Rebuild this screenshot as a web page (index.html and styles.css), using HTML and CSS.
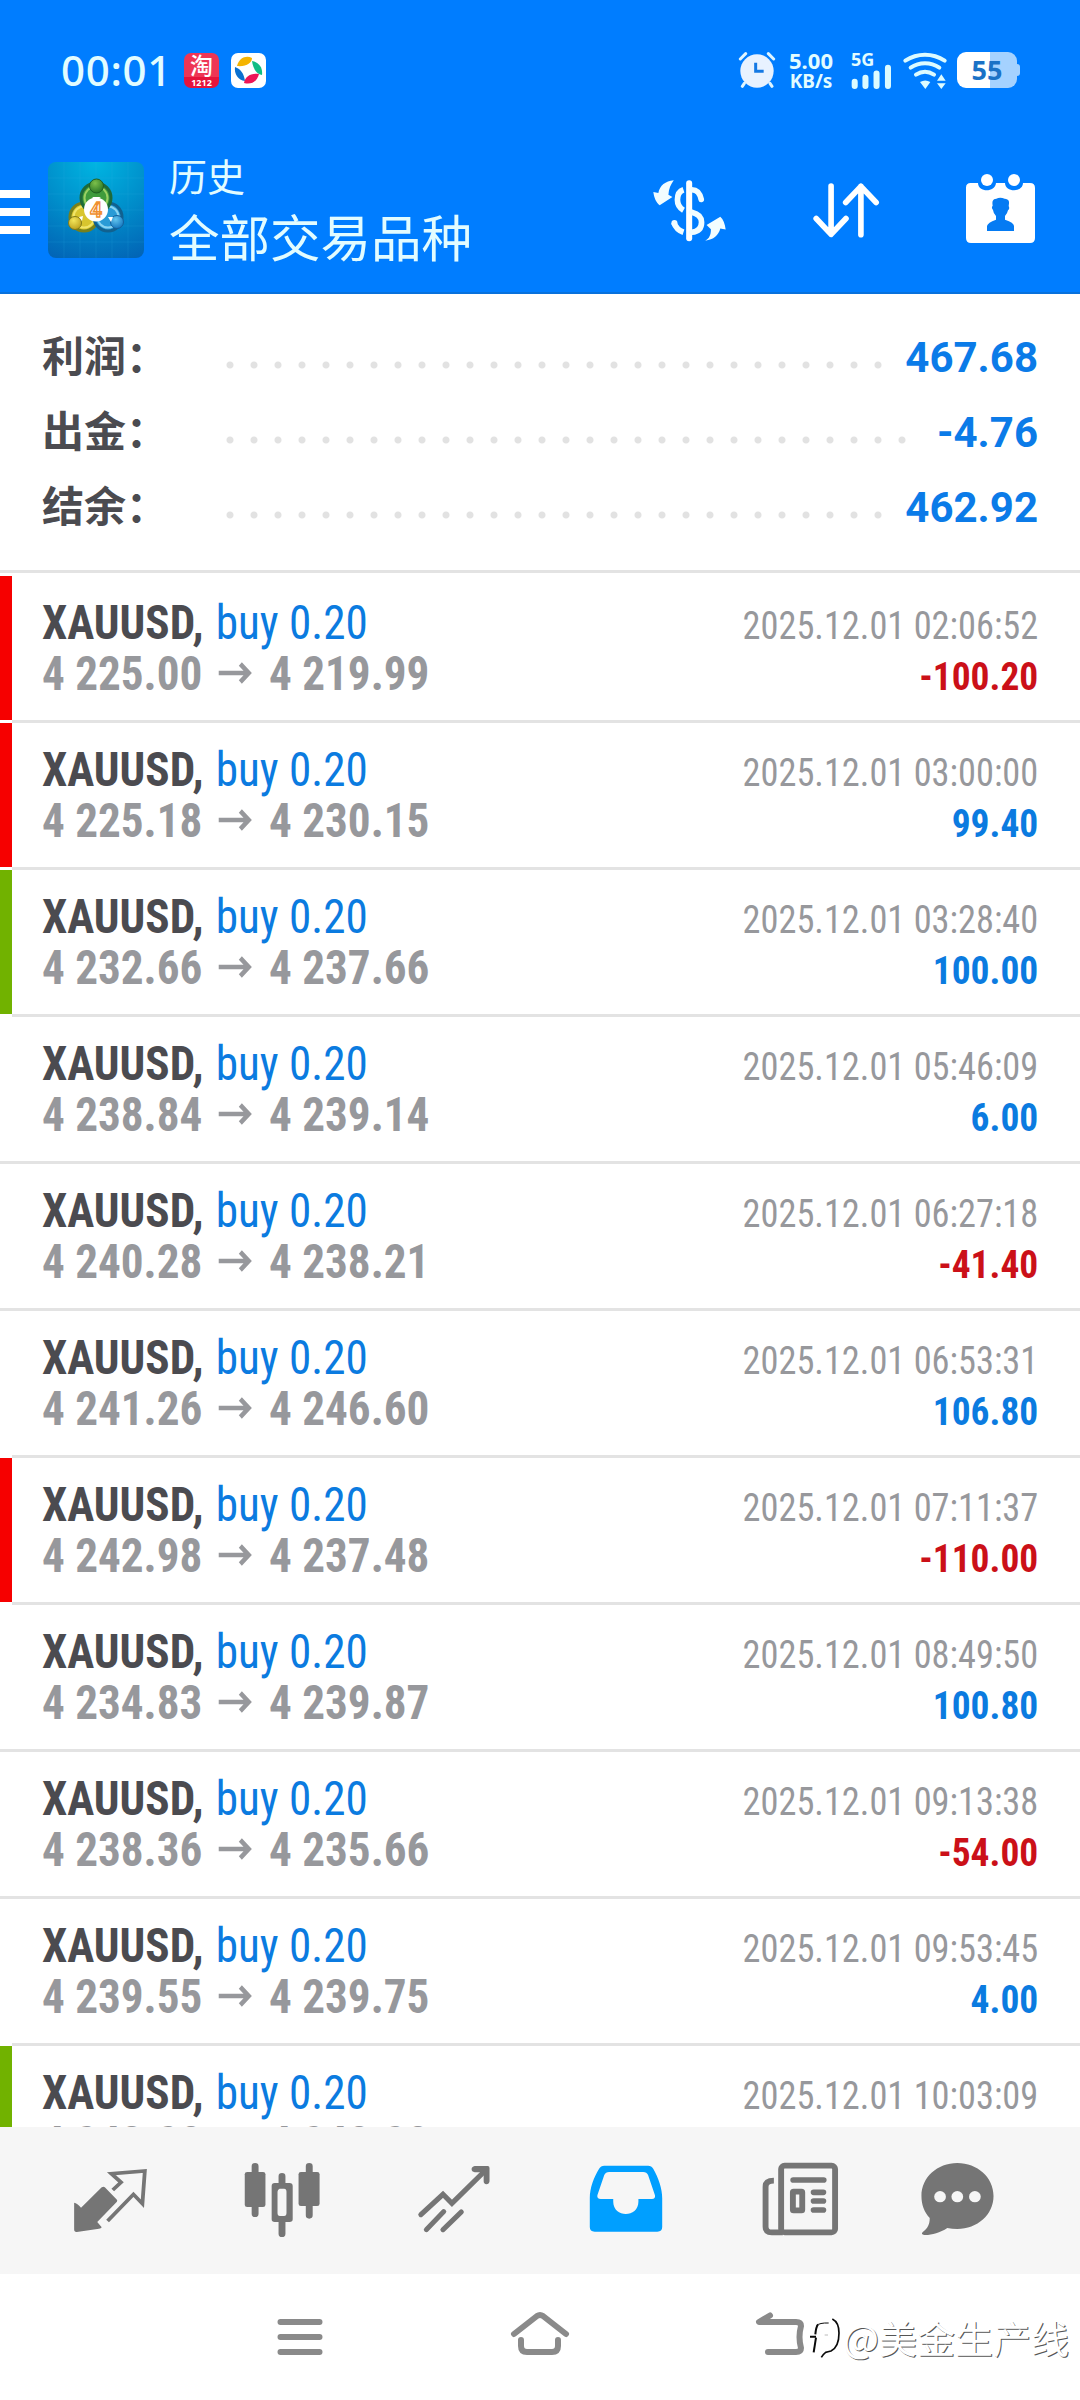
FILE: index.html
```html
<!DOCTYPE html>
<html lang="zh-CN">
<head>
<meta charset="utf-8">
<title>历史</title>
<link rel="stylesheet" href="styles.css">
</head>
<body>
<svg class="defs" width="0" height="0">
  <symbol id="arrow" viewBox="0 0 36 22"><path d="M0 11H32M23 2l9 9-9 9" fill="none" stroke="#97989c" stroke-width="4.6"/></symbol>
</svg>
<div class="screen">
  <header class="header">
    <div class="status">
      <span class="clock">00:01</span>
      <span class="app-shop"><b>淘</b><i>1212</i></span>
      <svg class="app-video" viewBox="0 0 35 35"><rect width="35" height="35" rx="7" fill="#fff"/><path d="M6 13C8 5 15 2 21 5c0 5-6 9-15 8z" fill="#f5b400"/><path d="M21 8c7 1 11 7 10 14-6-1-9-7-10-14z" fill="#10bd84"/><path d="M4 14c6 2 9 7 10 14C7 27 3 21 4 14z" fill="#0a70d0"/><path d="M13 30c1-6 6-10 15-9-2 8-8 11-15 9z" fill="#ed1556"/></svg>
      <svg class="alarm" viewBox="350 64 120 120" width="40" height="40"><g stroke="#dff5ff" stroke-width="9" stroke-linecap="round"><path d="M360 91l16-16M460 91l-16-16M372 164l-6 9M449 164l6 9"/></g><circle cx="410" cy="127" r="50" fill="#e8f2ff"/><path d="M406 102v26h24" fill="none" stroke="#1479e4" stroke-width="9"/></svg>
      <span class="speed"><b>5.00</b><i>KB/s</i></span>
      <span class="signal"><b>5G</b><svg viewBox="698 103 122 80" width="41" height="27"><g stroke="#dcfbff" stroke-width="18" stroke-linecap="round"><path d="M709 159v12M741 147v24M774 134v37M808 117v54"/></g></svg></span>
      <svg class="wifi" viewBox="847 64 141 120" width="47" height="40"><g fill="none" stroke="#dcfbff" stroke-width="12" stroke-linecap="round"><path d="M857 96c36-24 82-24 118 0M873 117c26-18 60-18 86 0M889 138c18-12 36-12 54 0"/></g><path d="M901 160q16-9 31 0l-15 21zM965 137l13 19h-26zM965 181l13-17h-26z" fill="#dcfbff"/></svg>
      <span class="battery"><span>55</span></span>
    </div>
    <div class="toolbar">
      <span class="burger"></span>
      <svg class="logo" viewBox="0 0 96 96">
        <defs>
          <radialGradient id="sky" cx=".5" cy="0" r="1.1"><stop offset="0" stop-color="#00b5e2"/><stop offset=".5" stop-color="#008fcb"/><stop offset="1" stop-color="#0263b5"/></radialGradient>
          <radialGradient id="gr" cx=".4" cy=".3" r=".8"><stop offset="0" stop-color="#7cc04a"/><stop offset="1" stop-color="#1f6e22"/></radialGradient>
          <radialGradient id="ye" cx=".4" cy=".3" r=".8"><stop offset="0" stop-color="#f3e55a"/><stop offset="1" stop-color="#b89a18"/></radialGradient>
          <radialGradient id="bl" cx=".4" cy=".3" r=".8"><stop offset="0" stop-color="#63c5ee"/><stop offset="1" stop-color="#0d6fbb"/></radialGradient>
        </defs>
        <rect width="96" height="96" rx="8" fill="url(#sky)"/>
        <path d="M16 0v96M32 0v96M48 0v96M64 0v96M80 0v96M0 16h96M0 32h96M0 48h96M0 64h96M0 80h96" stroke="#36b2e6" stroke-opacity=".16"/>
        <circle cx="36" cy="55" r="14" fill="#d8c52e" stroke="#77801c" stroke-width="3"/>
        <circle cx="36" cy="55" r="10.500" fill="none" stroke="#f1e568" stroke-width="2"/>
        <circle cx="60" cy="55" r="14" fill="#2a9bd6" stroke="#11618f" stroke-width="3"/>
        <circle cx="60" cy="55" r="10.500" fill="none" stroke="#8ad4f2" stroke-width="2"/>
        <circle cx="48" cy="36" r="15" fill="#3f9b3c" stroke="#1e6a3a" stroke-width="3"/>
        <circle cx="48" cy="36" r="11.500" fill="none" stroke="#9ad063" stroke-width="2"/>
        <circle cx="27" cy="61" r="6.500" fill="url(#ye)" stroke="#827a18"/><circle cx="69" cy="60" r="6.500" fill="url(#bl)" stroke="#145f9a"/><circle cx="48.500" cy="24" r="7" fill="url(#gr)" stroke="#215f22"/>
        <path d="M44 35l4 3 5-3zM31 55l4-1-1 5zM60 55l5 0-2 5z" fill="#fff"/>
        <circle cx="48" cy="47.500" r="12" fill="#fff"/><text x="48" y="55" text-anchor="middle" class="logo-four">4</text>
      </svg>
      <div class="titles"><h2>历史</h2><h1>全部交易品种</h1></div>
      <svg class="currency" viewBox="98 442 224 194" width="75" height="65"><path d="M163 449C138 452 121 464 117 487L102 484C104 501 111 517 121 523L159 499 147 492C148 475 154 461 163 449Z" fill="#f2fdff"/><path d="M257 629c12-6 17-17 17-34l-13-13 41-24c9 8 14 22 16 38l-16-3c-5 20-20 34-45 36z" fill="#f2fdff"/><path d="M209 458V622" stroke="#fff" stroke-width="18" stroke-linecap="round"/><path d="M192 477q-18 6-18 30 0 21 18 31M192 604q-21-7-29-29" fill="none" stroke="#f2fdff" stroke-width="17"/><circle cx="165" cy="576" r="9" fill="#f2fdff"/><path d="M217 477q22 0 28 29M217 544q29 7 29 30 0 27-29 30" fill="none" stroke="#f2fdff" stroke-width="17" stroke-linecap="round"/></svg>
      <svg class="sort" viewBox="576 454 204 172" width="68" height="57"><path d="M633 466V612M588 564l45 48 45-48M723 613V467M677 516l46-49 46 49" fill="none" stroke="#fff" stroke-width="17" stroke-linecap="round" stroke-linejoin="round"/></svg>
      <svg class="calendar" viewBox="1032 426 219 219" width="73" height="73"><path d="M1052 459h22c1 29 51 29 54 0h27c1 29 53 29 54 0h21q15 0 15 15V624q0 15-15 15H1053q-15 0-15-15V473q0-14 14-14z" fill="#fff"/><circle cx="1101" cy="450" r="18" fill="#fff"/><circle cx="1182" cy="450" r="18" fill="#fff"/><path d="M1101 603v-15q2-10 27-19v-11q-8-8-9-18-6-8-1-13c-2-14 0-20 11-21q11-5 25 0c13 2 15 7 12 22q4 8-2 13-2 10-9 17v11q27 9 27 19v15z" fill="#057bf3"/></svg>
    </div>
  </header>

  <section class="summary">
    <div class="sum-row"><span class="label">利润：</span><span class="leader"></span><span class="value">467.68</span></div>
    <div class="sum-row"><span class="label">出金：</span><span class="leader"></span><span class="value">-4.76</span></div>
    <div class="sum-row"><span class="label">结余：</span><span class="leader"></span><span class="value">462.92</span></div>
  </section>

  <main class="deals">
    <article class="deal sl"><div class="left"><p class="name"><b>XAUUSD,</b> buy 0.20</p><p class="prices">4 225.00<svg class="to"><use href="#arrow"/></svg>4 219.99</p></div><div class="right"><time>2025.12.01 02:06:52</time><p class="profit loss">-100.20</p></div></article>
    <article class="deal sl"><div class="left"><p class="name"><b>XAUUSD,</b> buy 0.20</p><p class="prices">4 225.18<svg class="to"><use href="#arrow"/></svg>4 230.15</p></div><div class="right"><time>2025.12.01 03:00:00</time><p class="profit">99.40</p></div></article>
    <article class="deal tp"><div class="left"><p class="name"><b>XAUUSD,</b> buy 0.20</p><p class="prices">4 232.66<svg class="to"><use href="#arrow"/></svg>4 237.66</p></div><div class="right"><time>2025.12.01 03:28:40</time><p class="profit">100.00</p></div></article>
    <article class="deal"><div class="left"><p class="name"><b>XAUUSD,</b> buy 0.20</p><p class="prices">4 238.84<svg class="to"><use href="#arrow"/></svg>4 239.14</p></div><div class="right"><time>2025.12.01 05:46:09</time><p class="profit">6.00</p></div></article>
    <article class="deal"><div class="left"><p class="name"><b>XAUUSD,</b> buy 0.20</p><p class="prices">4 240.28<svg class="to"><use href="#arrow"/></svg>4 238.21</p></div><div class="right"><time>2025.12.01 06:27:18</time><p class="profit loss">-41.40</p></div></article>
    <article class="deal"><div class="left"><p class="name"><b>XAUUSD,</b> buy 0.20</p><p class="prices">4 241.26<svg class="to"><use href="#arrow"/></svg>4 246.60</p></div><div class="right"><time>2025.12.01 06:53:31</time><p class="profit">106.80</p></div></article>
    <article class="deal sl"><div class="left"><p class="name"><b>XAUUSD,</b> buy 0.20</p><p class="prices">4 242.98<svg class="to"><use href="#arrow"/></svg>4 237.48</p></div><div class="right"><time>2025.12.01 07:11:37</time><p class="profit loss">-110.00</p></div></article>
    <article class="deal"><div class="left"><p class="name"><b>XAUUSD,</b> buy 0.20</p><p class="prices">4 234.83<svg class="to"><use href="#arrow"/></svg>4 239.87</p></div><div class="right"><time>2025.12.01 08:49:50</time><p class="profit">100.80</p></div></article>
    <article class="deal"><div class="left"><p class="name"><b>XAUUSD,</b> buy 0.20</p><p class="prices">4 238.36<svg class="to"><use href="#arrow"/></svg>4 235.66</p></div><div class="right"><time>2025.12.01 09:13:38</time><p class="profit loss">-54.00</p></div></article>
    <article class="deal"><div class="left"><p class="name"><b>XAUUSD,</b> buy 0.20</p><p class="prices">4 239.55<svg class="to"><use href="#arrow"/></svg>4 239.75</p></div><div class="right"><time>2025.12.01 09:53:45</time><p class="profit">4.00</p></div></article>
    <article class="deal tp"><div class="left"><p class="name"><b>XAUUSD,</b> buy 0.20</p><p class="prices">4 243.28<svg class="to"><use href="#arrow"/></svg>4 248.28</p></div><div class="right"><time>2025.12.01 10:03:09</time></div></article>
  </main>

  <nav class="tabs">
    <svg class="tab" viewBox="203 396 232 231" preserveAspectRatio="none"><path d="M215 518q9 2 20 15l60-61q5-3 9 0l33 35q5 4 2 8l-57 61 13 16q-2 4-8 4l-64 10q-8 1-8-8z" fill="#757575"/><path d="M327 480l24-23-28-26 97-8-7 98-26-28-75 80" fill="none" stroke="#757575" stroke-width="11"/></svg>
    <svg class="tab" viewBox="701 396 232 231" preserveAspectRatio="none"><g stroke="#757575" stroke-width="20" stroke-linecap="round" fill="#757575"><path d="M739 409V551M896 409V556M817 439V470M817 575V611"/></g><rect x="709" y="426" width="60" height="105" rx="7" fill="#757575"/><rect x="865" y="426" width="61" height="102" rx="7" fill="#757575"/><rect x="803" y="470" width="28" height="95" fill="#f6f6f6"/><path fill-rule="evenodd" d="M796 459h43q9 0 9 9v100q0 8-9 8h-43q-9 0-9-8V468q0-9 9-9zm14 17q-6 3-6 9v64q0 9 7 9h12q7 0 7-9v-64q0-9-7-9z" fill="#757575"/></svg>
    <svg class="tab" viewBox="1201 396 232 231" preserveAspectRatio="none"><g fill="none" stroke="#757575" stroke-width="15" stroke-linecap="round"><path d="M1221 554l64-61 26 27 96-98" stroke-linejoin="miter"/><path d="M1237 599l50-54M1285 599l53-53"/></g><path d="M1377 408h38q5 0 5 6v40q-1 9-9 9-8-1-8-9v-22l-7-5h-19q-9-2-9-9 0-8 9-10z" fill="#757575"/></svg>
    <svg class="tab" viewBox="135 396 232 231" preserveAspectRatio="none"><path d="M188 407H315q10 0 15 9c15 28 26 58 26 89v86q0 14-14 14H160q-14 0-14-14V505c0-32 12-64 27-89q5-9 15-9z" fill="#009fff"/><path d="M202 426h99q10 0 14 9l20 61q2 11-9 11H287v8c0 49-73 49-73 0v-8H178q-12 0-10-11l20-61q4-9 14-9z" fill="#f6f6f6"/></svg>
    <svg class="tab tab-news" viewBox="635 396 240 231" preserveAspectRatio="none"><g fill="none" stroke="#757575" stroke-width="17"><rect x="699" y="407" width="156" height="200" rx="10"/><path d="M678 452q-24 0-24 18V590q0 17 18 17h32"/><path d="M734 450h88M793 487h28M793 513h28M793 540h28" stroke-linecap="round"/></g><rect x="733" y="485" width="27" height="56" rx="2" fill="none" stroke="#757575" stroke-width="17"/></svg>
    <svg class="tab" viewBox="1099 396 232 231" preserveAspectRatio="none"><path d="M1213 399c58 0 105 43 105 99s-47 99-105 99q-15 0-29-3c-22 15-48 22-67 21q-11-3-4-9c15-11 20-24 20-42-16-18-24-40-24-66 0-56 46-99 104-99z" fill="#757575"/><circle cx="1163" cy="500" r="17" fill="#f6f6f6"/><circle cx="1213" cy="500" r="17" fill="#f6f6f6"/><circle cx="1264" cy="500" r="17" fill="#f6f6f6"/></svg>
  </nav>
  <footer class="sysnav">
    <svg viewBox="0 0 60 60" width="60" height="60"><path d="M10.500 15H49.500M10.500 30H49.500M10.500 45H49.500" stroke="#8a8a8a" stroke-width="6" stroke-linecap="round"/></svg>
    <svg viewBox="0 0 60 60" width="60" height="60"><g fill="none" stroke="#8a8a8a" stroke-width="6" stroke-linecap="round" stroke-linejoin="round"><path d="M4 27L27 9q3-2 6 0L56 27M11 33v6q0 6 6 6H42q6 0 6-6v-6"/></g></svg>
    <svg viewBox="0 0 60 60" width="60" height="60"><path d="M20 8.500L9 15H46q5 0 5 4-3 11 0 22 0 4-5 4H18" fill="none" stroke="#8a8a8a" stroke-width="6" stroke-linecap="round" stroke-linejoin="round"/></svg>
  </footer>
  <div class="watermark">
    <svg viewBox="25 85 100 135" width="34" height="45"><path d="M24 148l22-2c0-34 20-46 50-46l20 28-2 52-22 16-26 4-12-70-8 66h-12z" fill="#fff"/><g fill="none" stroke="#0a0a0a"><path d="M50 120q8-9 36-8" stroke-width="3"/><path d="M54 116q-6 8-8 30M30 153h18" stroke-width="6"/><path d="M48 156l-7 44" stroke-width="6"/><path d="M97 100q20 10 20 42 0 42-24 54-10 3-16 4-8 6-13 15" stroke-width="5"/><path d="M74 148h10" stroke="#999" stroke-width="2"/></g></svg>
    <span>@美金生产线</span>
  </div>
</div>
</body>
</html>
```
FILE: styles.css
```css
* { box-sizing: border-box; margin: 0; padding: 0; }
body { width: 1080px; height: 2400px; overflow: hidden; background: #fff; font-family: Roboto, "Noto Sans CJK SC", sans-serif; }
i { font-style: normal; }
.defs { display: block; position: absolute; }
.screen { position: relative; width: 1080px; height: 2400px; display: flex; flex-direction: column; background: #fff; }

.header { height: 294px; flex: none; background: #007dff; border-bottom: 2px solid #0871dc; color: #e2fcff; }
.status { height: 140px; padding-left: 61px; display: flex; align-items: center; font-family: "Noto Sans", "Noto Sans CJK SC", sans-serif; }
.clock { width: 123px; font-size: 42px; font-weight: 500; line-height: 40px; letter-spacing: .7px; }
.app-shop { width: 35px; height: 35px; border-radius: 7px; background: linear-gradient(#ee3655 0 70%, #e5143b 70%); display: flex; flex-direction: column; align-items: center; color: #fff; }
.app-shop b { font-size: 23px; line-height: 25px; font-weight: 500; }
.app-shop i { font-size: 9px; line-height: 9px; font-weight: 700; }
.app-video { width: 35px; height: 35px; margin-left: 12px; }
.alarm { margin-left: 471px; }
.speed { width: 54px; margin-left: 7px; display: flex; flex-direction: column; align-items: center; font-weight: 700; }
.speed b { font-size: 22px; line-height: 21px; font-weight: 700; }
.speed i { font-size: 19px; line-height: 20px; }
.signal { width: 43px; height: 40px; margin-left: 13px; display: flex; flex-direction: column; }
.signal b { font-size: 18px; line-height: 18px; height: 13px; font-weight: 700; }
.wifi { margin-left: 8px; }
.battery { position: relative; width: 60px; height: 36px; margin-left: 8px; border-radius: 9px; background: linear-gradient(90deg, #fff 55%, #a5d2ff 55%); color: #1b72c6; text-align: center; font-size: 27px; font-weight: 700; line-height: 36px; }
.battery::after { content: ""; position: absolute; right: -3px; top: 12px; width: 3px; height: 12px; border-radius: 0 3px 3px 0; background: #a5d2ff; }

.toolbar { height: 140px; display: flex; align-items: center; }
.burger { width: 30px; height: 44px; margin-top: 4px; background: repeating-linear-gradient(#fff 0 8px, transparent 8px 18px); }
.logo { width: 96px; height: 96px; margin-left: 18px; }
.logo-four { font: 700 21px Roboto, sans-serif; fill: #fff; stroke: #f09030; stroke-width: 1.4px; }
.titles { width: 487px; margin-left: 25px; font-family: "Noto Sans CJK SC", sans-serif; }
.titles h2 { font-size: 38px; font-weight: 400; line-height: 50px; }
.titles h1 { font-size: 50.500px; font-weight: 400; line-height: 70px; }
.currency { margin-left: -4px; }
.sort { margin-left: 85px; }
.calendar { margin-left: 84px; margin-bottom: 3px; }

.summary { height: 279px; flex: none; padding: 22px 42px 0; border-bottom: 3px solid #e3e3e3; color: #0b7be8; font-size: 42px; }
.sum-row { height: 75px; display: flex; line-height: 75px; align-items: baseline; }
.label { width: 176px; color: #4b4b50; font-family: "Noto Sans CJK SC", sans-serif; font-weight: 700; white-space: nowrap; }
.leader { flex: 1; height: 24px; margin-right: 18px; align-self: flex-start; margin-top: 37px; background: radial-gradient(circle at 12px 12px, #e2e2e2 3px, transparent 4px) 0 0 / 24px 24px; }
.value { font-weight: 700; }

.deals { flex: 1; min-height: 0; margin-top: 3px; overflow: hidden; font-family: "Roboto Condensed", Roboto, sans-serif; font-stretch: 75%; }
.deal { height: 147px; padding: 21px 42px 0 30px; display: flex; justify-content: space-between; border-left: 12px solid transparent; position: relative; background: linear-gradient(#e3e3e3, #e3e3e3) 0 100% / 100% 3px no-repeat; }
.deal:not(.sl, .tp, :has(+ .sl), :has(+ .tp)) { background-origin: border-box; }
.deal::before { content: ""; position: absolute; left: -12px; top: 0; width: 12px; height: 144px; }
.sl::before { background: #f60000; }
.tp::before { background: #71b200; }
.deal p, .deal time { display: block; line-height: 51px; white-space: nowrap; }
.left { transform: scaleX(.94); transform-origin: 0 0; }
.name { font-size: 48px; color: #0b7be0; }
.name b { color: #4b4b50; font-weight: 700; margin-right: 2px; }
.prices { font-size: 48px; font-weight: 700; color: #97989c; }
.to { width: 38px; height: 22px; margin: 0 17px 0 16px; vertical-align: 6px; }
.right { padding-top: 4px; text-align: right; font-size: 39px; color: #97989c; }
.right time { transform: scaleX(.932); transform-origin: 100% 0; }
.profit { font-weight: 700; color: #0b7be0; transform: scaleX(.96); transform-origin: 100% 0; }
.loss { color: #cb1018; }

.tabs { height: 147px; flex: none; padding: 5px 0 0 24px; display: grid; grid-template-columns: repeat(5, 172px) 148px; justify-items: center; align-items: start; background: #f6f6f6; }
.tab { width: 80px; height: 77px; margin-top: 30px; }
.tab-news { width: 83px; margin-left: 4px; }
.sysnav { height: 126px; flex: none; display: grid; grid-template-columns: repeat(3, 240px); justify-content: center; place-items: center; }
.watermark { position: absolute; left: 808px; top: 2314px; display: flex; align-items: center; gap: 1px; color: #fff; font: 400 38px/44px "Noto Sans CJK SC", sans-serif; text-shadow: 1px 1px 0 #555; white-space: nowrap; }
```
